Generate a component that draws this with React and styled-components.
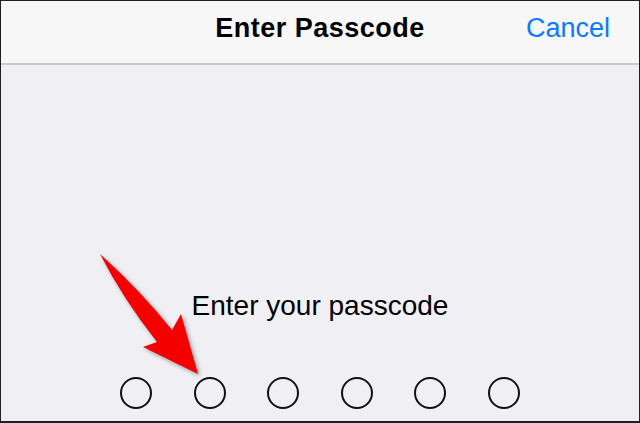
import React from "react";
import styled, { createGlobalStyle } from "styled-components";

const GlobalStyle = createGlobalStyle`
  html, body {
    margin: 0;
    padding: 0;
    background: #efeff4;
  }
  body {
    font-family: "Liberation Sans", Arial, sans-serif;
  }
`;

const Screen = styled.div`
  position: relative;
  width: 640px;
  height: 423px;
  box-sizing: border-box;
  border: 1px solid #1e1e1e;
  border-bottom-width: 2px;
  background: #efeff4;
  display: flex;
  flex-direction: column;
  overflow: hidden;
`;

const NavBar = styled.div`
  height: 64px;
  box-sizing: border-box;
  padding: 0 29px 8px;
  display: grid;
  grid-template-columns: 1fr auto 1fr;
  align-items: center;
  background: #f7f7f8;
  border-bottom: 2px solid #c9c8cd;
`;

const Title = styled.div`
  grid-column: 2;
  font-size: 27px;
  font-weight: 700;
  color: #000;
  letter-spacing: 0.5px;
`;

const NavButton = styled.button`
  grid-column: 3;
  justify-self: end;
  border: none;
  background: none;
  padding: 0;
  font-family: inherit;
  font-size: 27px;
  color: #0a7aff;
  cursor: pointer;
`;

const Body = styled.div`
  flex: 1;
  display: flex;
  flex-direction: column;
  align-items: center;
  padding-top: 224px;
`;

const Prompt = styled.div`
  font-size: 28px;
  line-height: 34px;
  color: #000;
`;

const Dots = styled.div`
  display: flex;
  gap: 41.5px;
  margin-top: 54px;
`;

const Dot = styled.span`
  width: 32px;
  height: 32px;
  box-sizing: border-box;
  border-radius: 50%;
  border: 2px solid #111;
  background: ${(p) => (p.filled ? "#000" : "transparent")};
`;

const Arrow = styled.svg`
  position: absolute;
  left: 0;
  top: 0;
  pointer-events: none;
  filter: drop-shadow(2px 2px 2px rgba(0, 0, 0, 0.35));
`;

function PointerArrow() {
  return (
    <Arrow width="640" height="423" viewBox="0 0 640 423">
      <path
        d="M99 253 Q 140 290 171 329 L 180 313 L 197 373 L 142 346 L 156 341 Q 122 298 99 253 Z"
        fill="#f40000"
      />
    </Arrow>
  );
}

export default function App() {
  const length = 6;
  const entered = 0;

  return (
    <>
      <GlobalStyle />
      <Screen>
        <NavBar>
          <Title>Enter Passcode</Title>
          <NavButton>Cancel</NavButton>
        </NavBar>
        <Body>
          <Prompt>Enter your passcode</Prompt>
          <Dots>
            {Array.from({ length }).map((_, i) => (
              <Dot key={i} filled={i < entered} />
            ))}
          </Dots>
        </Body>
        <PointerArrow />
      </Screen>
    </>
  );
}
